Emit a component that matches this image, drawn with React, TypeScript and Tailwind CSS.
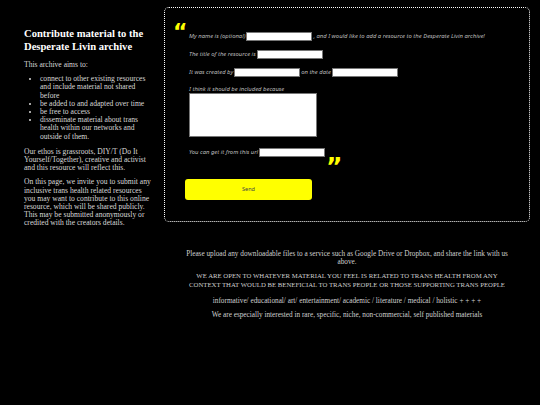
const AIMS = [
  "connect to other existing resources and include material not shared before",
  "be added to and adapted over time",
  "be free to access",
  "disseminate material about trans health within our networks and outside of them.",
];

function Field({ w = "w-[66px]" }: { w?: string }) {
  return <span className={`inline-block h-[9px] ${w} border border-[#777] bg-white`} />;
}

export default function App() {
  return (
    <div className="min-h-[405px] w-[540px] bg-black" style={{ fontFamily: '"Liberation Serif", serif' }}>
      <div className="flex pl-[24px] pr-[10px] pt-[7px]">
        {/* left intro column */}
        <div className="mt-[20px] w-[128px] shrink-0 text-[7.6px] leading-[8.2px] text-[#d8d8d8]">
          <h1 className="text-[10.6px] font-bold leading-[13px] text-white">
            Contribute material to the Desperate Livin archive
          </h1>
          <p className="mt-[8px]">This archive aims to:</p>
          <ul className="mt-[6px] list-disc pl-[16px]">
            {AIMS.map((a) => (
              <li key={a}>{a}</li>
            ))}
          </ul>
          <p className="mt-[7px]">
            Our ethos is grassroots, DIY/T (Do It Yourself/Together), creative and activist and this resource will reflect this.
          </p>
          <p className="mt-[6px]">
            On this page, we invite you to submit any inclusive trans health related resources you may want to contribute to this online resource, which will be shared publicly. This may be submitted anonymously or credited with the creators details.
          </p>
        </div>

        {/* right column */}
        <div className="ml-[12px] flex-1">
          <div className="h-[215px] rounded-[5px] border border-dotted border-white pl-[8px]">
            <div
              className="h-[24px] pt-[13px] text-[22px] font-bold leading-[22px] text-[#ffff00]"
              style={{ fontFamily: '"DejaVu Sans", sans-serif' }}
            >
              &ldquo;
            </div>
            <div
              className="ml-[16px] text-[5.9px] italic text-[#bdbdbd]"
              style={{ fontFamily: '"Noto Sans", sans-serif' }}
            >
              <div className="flex h-[9px] items-center gap-[1px]">
                <span>My name is (optional)</span>
                <Field />
                <span>, and I would like to add a resource to the Desperate Livin archive!</span>
              </div>
              <div className="mt-[9px] flex h-[9px] items-center gap-[1px]">
                <span>The title of the resource is</span>
                <Field />
              </div>
              <div className="mt-[9px] flex h-[9px] items-center gap-[1px]">
                <span>It was created by</span>
                <Field />
                <span>on the date</span>
                <Field />
              </div>
              <div className="mt-[9px] h-[7px] leading-[7px]">I think it should be included because</div>
              <div className="h-[44px] w-[128px] border border-[#777] bg-white" />
              <div className="mt-[11px] flex h-[9px] items-start gap-[1px]">
                <span className="leading-[9px]">You can get it from this url</span>
                <Field />
                <span
                  className="mt-[17px] text-[25px] font-bold not-italic leading-[4px] text-[#ffff00]"
                  style={{ fontFamily: '"DejaVu Sans", sans-serif' }}
                >
                  &rdquo;
                </span>
              </div>
            </div>
            <button
              className="ml-[12px] mt-[22px] flex h-[21px] w-[127px] items-center justify-center rounded-[3px] bg-[#ffff00] text-[5.5px] text-[#444]"
              style={{ fontFamily: '"Noto Sans", sans-serif' }}
            >
              Send
            </button>
          </div>

          <div className="mt-[28px] px-[20px] text-center text-[7.25px] leading-[8.2px] text-[#cfcfcf]">
            <p>
              Please upload any downloadable files to a service such as Google Drive or Dropbox, and share the link with us above.
            </p>
            <p className="mt-[6px] text-[6.75px]">
              WE ARE OPEN TO WHATEVER MATERIAL YOU FEEL IS RELATED TO TRANS HEALTH FROM ANY CONTEXT THAT WOULD BE BENEFICIAL TO TRANS PEOPLE OR THOSE SUPPORTING TRANS PEOPLE
            </p>
            <p className="mt-[8px]">
              informative/ educational/ art/ entertainment/ academic / literature / medical / holistic + + + +
            </p>
            <p className="mt-[6px]">
              We are especially interested in rare, specific, niche, non-commercial, self published materials
            </p>
          </div>
        </div>
      </div>
    </div>
  );
}
